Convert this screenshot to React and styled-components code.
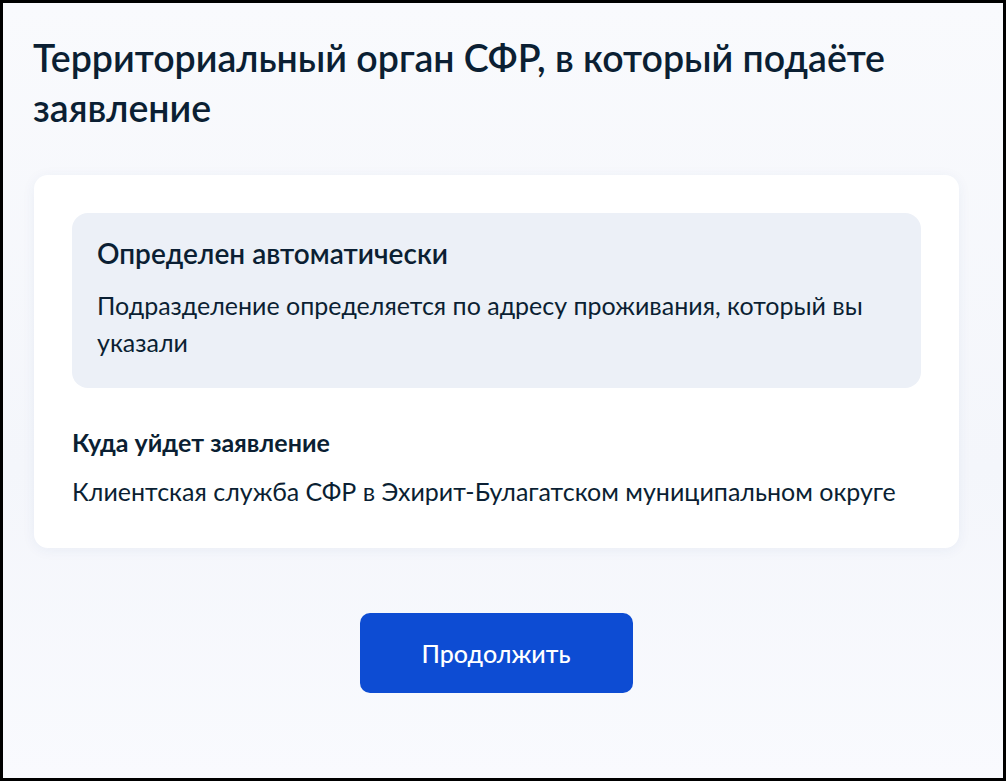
import React from 'react';
import styled, { createGlobalStyle } from 'styled-components';

const GlobalStyle = createGlobalStyle`
    html, body {
        margin: 0;
        padding: 0;
    }
    body {
        font-family: Lato, "Noto Sans", sans-serif;
        color: #0b1f33;
    }
`

const Frame = styled.div`
    box-sizing: border-box;
    width: 1006px;
    height: 781px;
    border: 3px solid #000;
    background: linear-gradient(180deg, #f9fafd 0%, #f4f6fb 60%, #f9fafe 100%);
    overflow: hidden;
`

const Column = styled.div`
    width: 926px;
    margin-left: 30px;
    padding-top: 30px;
    display: flex;
    flex-direction: column;
`

const Title = styled.h1`
    margin: 0 0 42px 0;
    font-size: 37.5px;
    line-height: 50px;
    font-weight: 600;
    color: #0b1f33;
`

const Card = styled.section`
    margin-left: 1px;
    background: #fff;
    border-radius: 14px;
    box-shadow: 0 2px 14px rgba(30, 60, 130, 0.06);
    padding: 37.5px 38px 37.5px 38px;
`

const Notice = styled.div`
    background: #ecf0f7;
    border-radius: 16px;
    padding: 24px 25px 26px 25px;
`

const NoticeTitle = styled.h2`
    margin: 0 0 18px 0;
    font-size: 28px;
    line-height: 32px;
    font-weight: 600;
`

const Text = styled.p`
    margin: 0;
    font-size: 25px;
    line-height: 37.5px;
    font-weight: 400;
    color: #0b1f33;
`

const Section = styled.div`
    margin-top: 36px;
    display: flex;
    flex-direction: column;
    gap: 12px;
`

const Label = styled.h3`
    margin: 0;
    font-size: 25px;
    line-height: 37.5px;
    font-weight: 700;
`

const Actions = styled.div`
    display: flex;
    justify-content: center;
    margin-top: 65px;
`

const Button = styled.button`
    width: 273px;
    height: 80px;
    border: none;
    border-radius: 10px;
    background: #0d4cd3;
    color: #fff;
    font-family: Lato, "Noto Sans", sans-serif;
    font-size: 25px;
    font-weight: 500;
    cursor: pointer;
`

const App = () => {
    return (
        <>
            <GlobalStyle />
            <Frame>
                <Column>
                    <Title>Территориальный орган СФР, в который подаёте заявление</Title>
                    <Card>
                        <Notice>
                            <NoticeTitle>Определен автоматически</NoticeTitle>
                            <Text>Подразделение определяется по адресу проживания, который вы указали</Text>
                        </Notice>
                        <Section>
                            <Label>Куда уйдет заявление</Label>
                            <Text>Клиентская служба СФР в Эхирит-Булагатском муниципальном округе</Text>
                        </Section>
                    </Card>
                    <Actions>
                        <Button>Продолжить</Button>
                    </Actions>
                </Column>
            </Frame>
        </>
    );
}

export default App;
